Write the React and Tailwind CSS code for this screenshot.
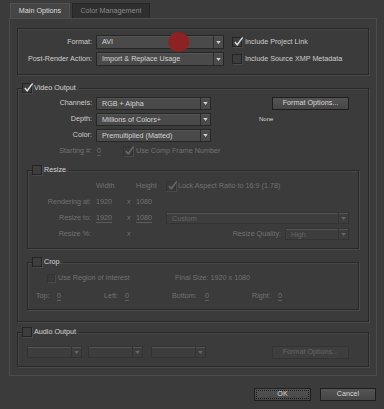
import React from 'react';

const DIM = 'text-[#727272]';

function Check({ checked, dim, small }) {
    const size = small ? 'w-[8px] h-[8px]' : 'w-[10px] h-[10px]';
    return (
        <span className={`relative inline-block shrink-0 ${size} border ${dim ? 'border-[#333] bg-[#3a3a3a]' : 'border-[#242424] bg-[#3d3d3d]'} shadow-[1px_1px_0_#4a4a4a]`}>
            {checked && (
                <svg viewBox="0 0 12 12" className="absolute left-[0px] top-[-2px] w-[11px] h-[11px]">
                    <path d="M2 6.5 L4.6 9.5 L10.5 1.5" fill="none" stroke={dim ? '#6a6a6a' : '#dcdcdc'} strokeWidth="1.6" />
                </svg>
            )}
        </span>
    );
}

function Select({ value, width, dim, h = 'h-[13px]' }) {
    return (
        <div className={`flex ${h} ${width} shrink-0 border ${dim ? 'border-[#333] bg-[#3d3d3d] text-[#666]' : 'border-[#262626] bg-[#4a4a4a] text-[#d4d4d4]'} shadow-[inset_0_1px_0_#555]`}>
            <span className="flex-1 pl-[5px] leading-[11px] truncate">{value}</span>
            <span className={`w-[10px] flex items-center justify-center border-l ${dim ? 'border-[#333]' : 'border-[#2c2c2c]'}`}>
                <svg viewBox="0 0 6 4" className="w-[5px] h-[3px]">
                    <path d="M0 0 L6 0 L3 4 Z" fill={dim ? '#666' : '#cfcfcf'} />
                </svg>
            </span>
        </div>
    );
}

function Button({ children, width, dim, focus }) {
    return (
        <div className={`relative flex items-center justify-center h-[13px] ${width} shrink-0 border ${dim ? 'border-[#343434] bg-[#3e3e3e] text-[#666]' : 'border-[#1e1e1e] bg-gradient-to-b from-[#545454] to-[#464646] text-[#d6d6d6]'}`}>
            {focus && <span className="absolute inset-[1px] border border-dotted border-[#1a1a1a]"></span>}
            <span className="relative">{children}</span>
        </div>
    );
}

function Group({ title, checked, width, className = '', children }) {
    return (
        <fieldset className={`${width} border border-[#282828] shadow-[1px_1px_0_#4a4a4a,inset_1px_1px_0_#474747] ${className}`}>
            <legend className="ml-[4px] pr-[3px] h-[10px] flex items-center gap-[2px] text-[#d2d2d2]">
                <Check checked={checked} />
                <span>{title}</span>
            </legend>
            {children}
        </fieldset>
    );
}

function Num({ children }) {
    return <span className={`${DIM} border-b border-[#5c5c5c] leading-[9px]`}>{children}</span>;
}

export default function App() {
    return (
        <div className="relative w-[384px] h-[409px] overflow-hidden bg-[#3b3b3b] text-[7.2px] text-[#cfcfcf] font-['Liberation_Sans',Arial,sans-serif]">
            {/* Tabs */}
            <div className="flex gap-[2px] pl-[10px] pt-[3px] h-[18px]">
                <div className="w-[60px] h-[15px] flex items-center justify-center bg-[#454545] border border-b-0 border-[#505050] text-[#dedede]">Main Options</div>
                <div className="w-[78px] h-[15px] flex items-center justify-center bg-[#2f2f2f] border border-b-0 border-[#262626] text-[#8a8a8a]">Color Management</div>
            </div>

            {/* Tab panel */}
            <div className="ml-[9px] w-[368px] h-[358px] border border-[#4c4c4c] pl-[7px] pt-[9px]">
                {/* Format box */}
                <div className="w-[352px] h-[47px] border border-[#282828] shadow-[1px_1px_0_#4a4a4a,inset_1px_1px_0_#474747] pt-[6px] flex flex-col gap-[3px]">
                    <div className="flex items-center h-[14px]">
                        <span className="w-[74px] text-right">Format:</span>
                        <div className="ml-[4px]"><Select value="AVI" width="w-[128px]" h="h-[14px]" /></div>
                        <div className="ml-[8px] flex items-center gap-[3px]"><Check checked /><span>Include Project Link</span></div>
                    </div>
                    <div className="flex items-center h-[14px]">
                        <span className="w-[74px] text-right">Post-Render Action:</span>
                        <div className="ml-[4px]"><Select value="Import & Replace Usage" width="w-[128px]" h="h-[14px]" /></div>
                        <div className="ml-[8px] flex items-center gap-[3px]"><Check /><span>Include Source XMP Metadata</span></div>
                    </div>
                </div>

                {/* Video Output */}
                <Group title="Video Output" checked width="w-[352px]" className="mt-[8px] h-[239px]">
                    <div className="mt-[4px] flex flex-col gap-[3px]">
                        <div className="flex items-center h-[13px]">
                            <span className="w-[74px] text-right">Channels:</span>
                            <div className="ml-[4px]"><Select value="RGB + Alpha" width="w-[115px]" /></div>
                            <div className="ml-[61px]"><Button width="w-[77px]">Format Options...</Button></div>
                        </div>
                        <div className="flex items-center h-[13px]">
                            <span className="w-[74px] text-right">Depth:</span>
                            <div className="ml-[4px]"><Select value="Millions of Colors+" width="w-[115px]" /></div>
                            <span className="ml-[48px] text-[6px] text-[#d8d8d8]">None</span>
                        </div>
                        <div className="flex items-center h-[13px]">
                            <span className="w-[74px] text-right">Color:</span>
                            <div className="ml-[4px]"><Select value="Premultiplied (Matted)" width="w-[115px]" /></div>
                        </div>
                        <div className="flex items-center h-[13px]">
                            <span className={`w-[74px] text-right ${DIM}`}>Starting #:</span>
                            <span className="ml-[5px] w-[26px]"><Num>0</Num></span>
                            <div className={`flex items-center gap-[3px] ${DIM}`}><Check checked dim /><span>Use Comp Frame Number</span></div>
                        </div>
                    </div>

                    {/* Resize */}
                    <Group title="Resize" width="w-[332px]" className="ml-[9px] mt-[7px] h-[84px]">
                        <div className={`mt-[5px] flex flex-col gap-[4px] ${DIM}`}>
                            <div className="flex items-center h-[12px]">
                                <span className="w-[63px]"></span>
                                <span className="ml-[5px] w-[40px]">Width</span>
                                <span className="w-[30px]">Height</span>
                                <div className="flex items-center gap-[2px]"><Check checked dim /><span>Lock Aspect Ratio to 16:9 (1.78)</span></div>
                            </div>
                            <div className="flex items-center h-[12px]">
                                <span className="w-[63px] text-right">Rendering at:</span>
                                <span className="ml-[5px] w-[31px]">1920</span>
                                <span className="w-[9px]">x</span>
                                <span className="w-[30px]">1080</span>
                            </div>
                            <div className="flex items-center h-[12px]">
                                <span className="w-[63px] text-right">Resize to:</span>
                                <span className="ml-[5px] w-[31px]"><Num>1920</Num></span>
                                <span className="w-[9px]">x</span>
                                <span className="w-[30px]"><Num>1080</Num></span>
                                <Select value="Custom" width="w-[183px]" dim h="h-[12px]" />
                            </div>
                            <div className="flex items-center h-[12px]">
                                <span className="w-[63px] text-right">Resize %:</span>
                                <span className="ml-[5px] w-[31px]"></span>
                                <span className="w-[9px]">x</span>
                                <span className="w-[30px]"></span>
                                <span className="w-[115px] text-right">Resize Quality:</span>
                                <div className="ml-[4px]"><Select value="High" width="w-[64px]" dim h="h-[12px]" /></div>
                            </div>
                        </div>
                    </Group>

                    {/* Crop */}
                    <Group title="Crop" width="w-[332px]" className="ml-[9px] mt-[8px] h-[53px]">
                        <div className={`mt-[5px] flex flex-col gap-[6px] ${DIM}`}>
                            <div className="flex items-center h-[12px] pl-[19px]">
                                <div className="w-[128px] flex items-center gap-[3px]"><Check small dim /><span>Use Region of Interest</span></div>
                                <span>Final Size: 1920 x 1080</span>
                            </div>
                            <div className="flex items-center h-[12px] pl-[8px]">
                                <div className="w-[68px] flex"><span className="w-[21px]">Top:</span><Num>0</Num></div>
                                <div className="w-[68px] flex"><span className="w-[21px]">Left:</span><Num>0</Num></div>
                                <div className="w-[80px] flex"><span className="w-[33px]">Bottom:</span><Num>0</Num></div>
                                <div className="flex"><span className="w-[26px]">Right:</span><Num>0</Num></div>
                            </div>
                        </div>
                    </Group>
                </Group>

                {/* Audio Output */}
                <Group title="Audio Output" width="w-[352px]" className="mt-[5px] h-[40px]">
                    <div className="mt-[9px] flex items-center h-[12px] pl-[9px]">
                        <Select value="" width="w-[55px]" dim h="h-[12px]" />
                        <div className="ml-[6px]"><Select value="" width="w-[55px]" dim h="h-[12px]" /></div>
                        <div className="ml-[8px]"><Select value="" width="w-[55px]" dim h="h-[12px]" /></div>
                        <div className="ml-[66px]"><Button width="w-[77px]" dim>Format Options...</Button></div>
                    </div>
                </Group>
            </div>

            {/* Dialog buttons */}
            <div className="flex justify-end gap-[9px] pr-[8px] mt-[12px]">
                <Button width="w-[57px]" focus>OK</Button>
                <Button width="w-[56px]">Cancel</Button>
            </div>

            {/* annotation dot */}
            <span className="absolute left-[168px] top-[32px] w-[21px] h-[20px] rounded-full bg-[#8e2222]"></span>
        </div>
    );
}
